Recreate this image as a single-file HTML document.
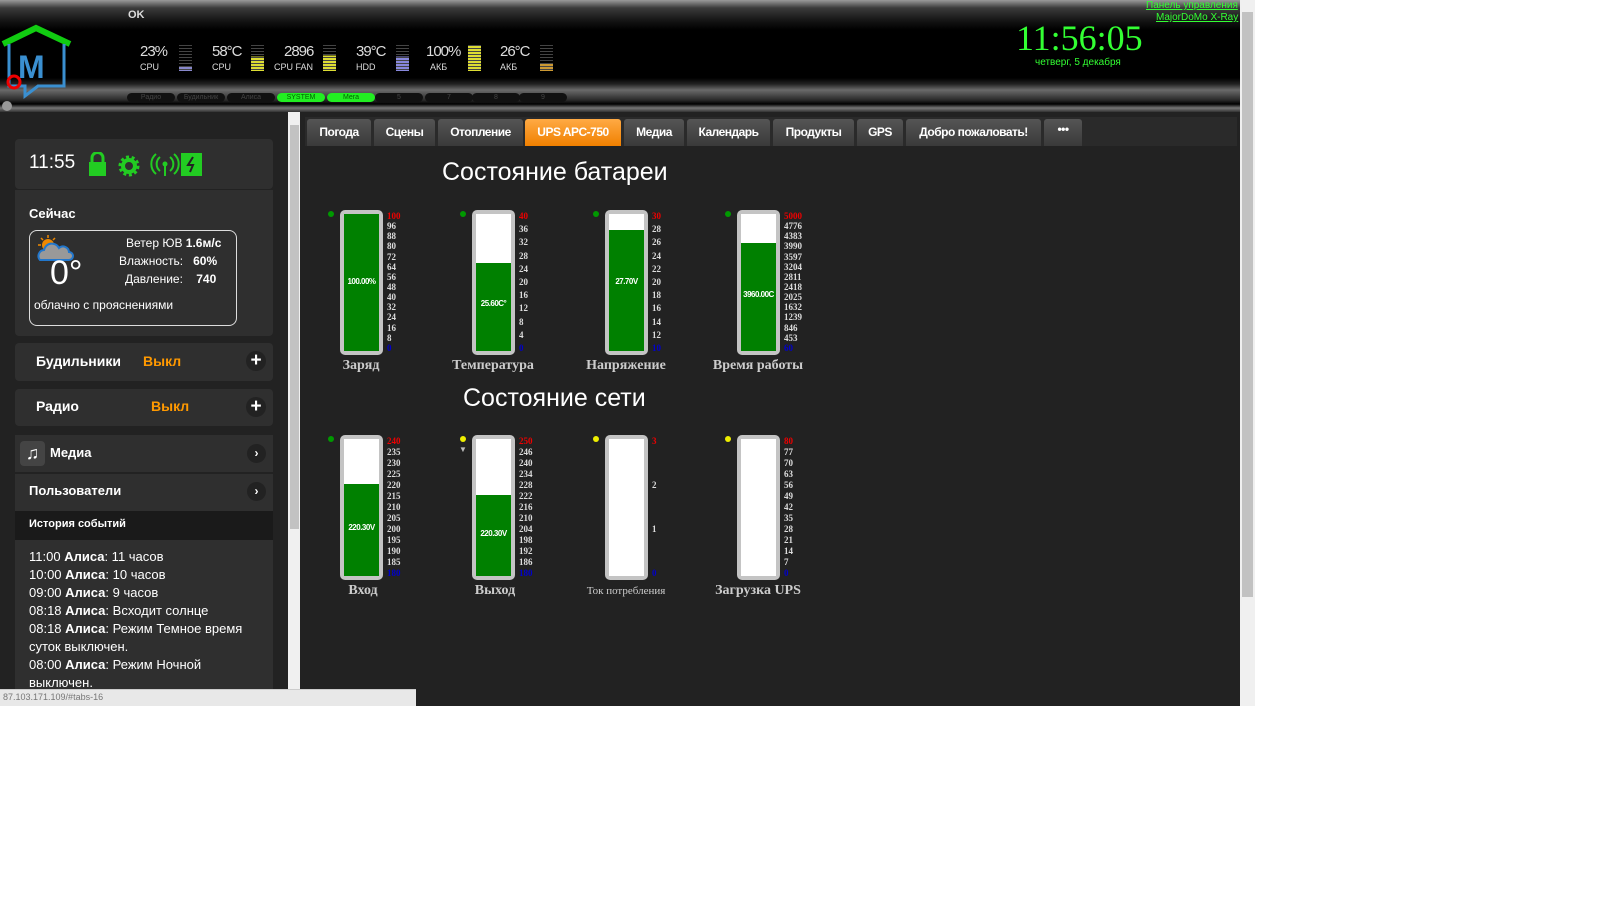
<!DOCTYPE html>
<html><head><meta charset="utf-8"><style>
*{margin:0;padding:0;box-sizing:border-box}
body{width:1600px;height:900px;background:#fff;font-family:"Liberation Sans",sans-serif;position:relative;overflow:hidden}
.a{position:absolute}
#hdr{left:0;top:0;width:1240px;height:112px;background:linear-gradient(#9a9a9a 0px,#3a3a3a 8px,#111 22px,#000 30px,#000 78px,#222 84px,#6a6a6a 90px,#2a2a2a 100px,#000 104px,#777 108px,#333 112px)}
.st{color:#ddd;font-size:15px;letter-spacing:-1px}
.sl{color:#ddd;font-size:9px}
.bars{width:13px;height:26px;background:repeating-linear-gradient(#444 0 1px,transparent 1px 3px)}
.pill{top:93px;height:9px;width:48px;border-radius:5px;background:#111;color:#444;font-size:7px;text-align:center;line-height:9px}
#side{left:0;top:112px;width:288px;height:594px;background:#222}
.pan{background:#2f2f2f;border-radius:4px;left:15px;width:258px}
.w{color:#fff}
#main{left:300px;top:112px;width:940px;height:594px;background:#222}
.tab{top:119px;height:27px;background:linear-gradient(#555,#3a3a3a);color:#fff;font-size:12px;font-weight:bold;line-height:26px;text-align:center;border-radius:3px 3px 0 0;letter-spacing:-0.5px}
.tube{width:43px;height:145px;background:#c4c4c4;border-radius:5px}
.in{left:4px;top:4px;width:35px;height:137px;background:#fff;overflow:hidden}
.fill{left:0;bottom:0;width:35px;background:#008000}
.val{left:0;width:35px;text-align:center;color:#fff;font-size:8px;font-weight:bold;letter-spacing:-0.5px;top:63px}
.sc{height:141px;top:2px;display:flex;flex-direction:column;justify-content:space-between;font-family:"Liberation Serif",serif;font-size:9px;font-weight:bold;color:#ddd;line-height:9px}
.sc b:first-child{color:#e00}.sc b:last-child{color:#00c}
.dot{width:6px;height:6px;border-radius:3px;background:#090}
.lab{color:#ccc;font-family:"Liberation Serif",serif;font-weight:bold;font-size:14px;width:140px;text-align:center}
.ttl{color:#fff;font-size:25px}
.ev{color:#fff;font-size:13px;line-height:18px}
</style></head><body>
<div id="hdr" class="a"></div>
<div class="a" style="left:128px;top:9px;color:#ddd;font-size:11px;font-weight:bold">OK</div>
<svg class="a" style="left:0;top:24px" width="75" height="75" viewBox="0 0 75 75">
<path d="M3 20 L36 4 L70 20" stroke="#1c1" stroke-width="6" fill="none"/>
<path d="M9 20 V62 H25 V72 L38 62 H64 V20" stroke="#3a8fd0" stroke-width="3" fill="none"/>
<text x="18" y="54" font-family="Liberation Sans" font-size="32" font-weight="bold" fill="#3a8fd0">M</text>
<circle cx="14" cy="58" r="6" stroke="#e00" stroke-width="3" fill="none"/>
</svg>
<div class="a st" style="left:140px;top:43px">23%</div><div class="a sl" style="left:140px;top:62px">CPU</div><div class="a bars" style="left:179px;top:45px;background:repeating-linear-gradient(#444 0 1px,transparent 1px 3px),linear-gradient(transparent 80%,#88c 80%)"></div>
<div class="a st" style="left:212px;top:43px">58°C</div><div class="a sl" style="left:212px;top:62px">CPU</div><div class="a bars" style="left:251px;top:45px;background:repeating-linear-gradient(#444 0 1px,transparent 1px 3px),linear-gradient(transparent 45%,#dd3 45%)"></div>
<div class="a st" style="left:284px;top:43px">2896</div><div class="a sl" style="left:274px;top:62px">CPU FAN</div><div class="a bars" style="left:323px;top:45px;background:repeating-linear-gradient(#444 0 1px,transparent 1px 3px),linear-gradient(transparent 40%,#dd3 40%)"></div>
<div class="a st" style="left:356px;top:43px">39°C</div><div class="a sl" style="left:356px;top:62px">HDD</div><div class="a bars" style="left:396px;top:45px;background:repeating-linear-gradient(#444 0 1px,transparent 1px 3px),linear-gradient(transparent 45%,#88d 45%)"></div>
<div class="a st" style="left:426px;top:43px">100%</div><div class="a sl" style="left:430px;top:62px">АКБ</div><div class="a bars" style="left:468px;top:45px;background:repeating-linear-gradient(#444 0 1px,transparent 1px 3px),linear-gradient(#dd3,#dd3)"></div>
<div class="a st" style="left:500px;top:43px">26°C</div><div class="a sl" style="left:500px;top:62px">АКБ</div><div class="a bars" style="left:540px;top:45px;background:repeating-linear-gradient(#444 0 1px,transparent 1px 3px),linear-gradient(transparent 70%,#c93 70%)"></div>
<div class="a pill" style="left:127px">Радио</div><div class="a pill" style="left:177px">Будильник</div><div class="a pill" style="left:227px">Алиса</div><div class="a pill" style="left:277px;background:#2e2;color:#060">SYSTEM</div><div class="a pill" style="left:327px;background:#2e2;color:#060">Мега</div><div class="a pill" style="left:375px">5</div><div class="a pill" style="left:425px">7</div><div class="a pill" style="left:472px">8</div><div class="a pill" style="left:519px">9</div>
<div class="a" style="left:2px;top:101px;width:10px;height:10px;border-radius:5px;background:#999"></div>
<div class="a" style="left:1016px;top:17px;color:#3f3;font-family:'Liberation Serif',serif;font-size:36px">11:56:05</div>
<div class="a" style="left:1035px;top:57px;color:#3f3;font-size:10px">четверг,  5 декабря</div>
<div class="a" style="left:1146px;top:0;color:#3f3;font-size:10px;text-decoration:underline">Панель управления</div>
<div class="a" style="left:1156px;top:12px;color:#3f3;font-size:10px;text-decoration:underline">MajorDoMo X-Ray</div>

<div id="side" class="a"></div>
<div class="a pan" style="top:139px;height:50px"></div>
<div class="a w" style="left:29px;top:152px;font-size:19px">11:55</div>
<svg class="a" style="left:88px;top:152px" width="120" height="26">
<rect x="1" y="10" width="17" height="14" fill="#2c2"/><path d="M4 11 V6 a5.5 5.5 0 0 1 11 0 V11" stroke="#2c2" stroke-width="3" fill="none"/>
<circle cx="41" cy="14" r="6" stroke="#2c2" stroke-width="4" fill="none"/><circle cx="41" cy="14" r="9" stroke="#2c2" stroke-width="3" stroke-dasharray="3 2.6" fill="none"/>
<path d="M72 5 a9 9 0 0 0 0 14 M68 2 a13 13 0 0 0 0 20 M82 5 a9 9 0 0 1 0 14 M86 2 a13 13 0 0 1 0 20" stroke="#2c2" stroke-width="2" fill="none"/><circle cx="77" cy="12" r="2.5" fill="#2c2"/><rect x="76" y="12" width="2" height="12" fill="#2c2"/>
<rect x="93" y="1" width="21" height="23" fill="#2c2"/><path d="M105 5 L100 13 H105 L102 20" stroke="#222" stroke-width="2" fill="none"/>
</svg>
<div class="a" style="left:15px;top:190px;width:258px;height:146px;background:#2f2f2f;border-radius:0 0 4px 4px"></div>
<div class="a w" style="left:29px;top:206px;font-size:13px;font-weight:bold">Сейчас</div>
<div class="a" style="left:29px;top:230px;width:208px;height:96px;border:1px solid #ddd;border-radius:8px"></div>
<svg class="a" style="left:32px;top:233px" width="46" height="30"><circle cx="16" cy="12" r="6" fill="#e80"/><path d="M16 2v3M6 12h3M9 5l2 2M23 5l-2 2" stroke="#e80" stroke-width="1.5"/><path d="M8 27 a6 6 0 0 1 4-10 a8 8 0 0 1 15-2 a6 6 0 0 1 10 4 a4 4 0 0 1 0 8z" fill="#999" stroke="#27c" stroke-width="2"/></svg>
<div class="a w" style="left:50px;top:254px;font-size:34px">0°</div>
<div class="a w" style="left:126px;top:236px;font-size:12px">Ветер ЮВ <b>1.6м/с</b></div>
<div class="a w" style="left:119px;top:254px;font-size:12px">Влажность:&nbsp;&nbsp; <b>60%</b></div>
<div class="a w" style="left:125px;top:272px;font-size:12px">Давление:&nbsp;&nbsp;&nbsp; <b>740</b></div>
<div class="a w" style="left:34px;top:298px;font-size:12px">облачно с прояснениями</div>

<div class="a pan" style="top:343px;height:38px"></div>
<div class="a w" style="left:36px;top:353px;font-size:14px;font-weight:bold">Будильники</div>
<div class="a" style="left:143px;top:353px;font-size:14px;font-weight:bold;color:#f90">Выкл</div>
<div class="a" style="left:246px;top:351px;width:20px;height:20px;border-radius:10px;background:#222;color:#fff;font-size:19px;font-weight:bold;text-align:center;line-height:20px">+</div>
<div class="a pan" style="top:389px;height:37px"></div>
<div class="a w" style="left:36px;top:398px;font-size:14px;font-weight:bold">Радио</div>
<div class="a" style="left:151px;top:398px;font-size:14px;font-weight:bold;color:#f90">Выкл</div>
<div class="a" style="left:246px;top:397px;width:20px;height:20px;border-radius:10px;background:#222;color:#fff;font-size:19px;font-weight:bold;text-align:center;line-height:20px">+</div>
<div class="a" style="left:15px;top:435px;width:258px;height:38px;background:#2f2f2f;border-bottom:1px solid #222"></div>
<div class="a" style="left:20px;top:441px;width:25px;height:25px;border-radius:4px;background:#444;color:#fff;font-size:18px;text-align:center;line-height:25px">♫</div>
<div class="a w" style="left:50px;top:445px;font-size:13px;font-weight:bold">Медиа</div>
<div class="a" style="left:247px;top:444px;width:19px;height:19px;border-radius:10px;background:#222;color:#fff;font-size:12px;font-weight:bold;text-align:center;line-height:19px">›</div>
<div class="a" style="left:15px;top:474px;width:258px;height:37px;background:#2f2f2f"></div>
<div class="a w" style="left:29px;top:483px;font-size:13px;font-weight:bold">Пользователи</div>
<div class="a" style="left:247px;top:482px;width:19px;height:19px;border-radius:10px;background:#222;color:#fff;font-size:12px;font-weight:bold;text-align:center;line-height:19px">›</div>
<div class="a" style="left:15px;top:511px;width:258px;height:29px;background:#1a1a1a"></div>
<div class="a w" style="left:29px;top:518px;font-size:11px;font-weight:bold">История событий</div>
<div class="a" style="left:15px;top:540px;width:258px;height:166px;background:#2f2f2f"></div>
<div class="a ev" style="left:29px;top:548px;width:232px">11:00 <b>Алиса</b>: 11 часов<br>10:00 <b>Алиса</b>: 10 часов<br>09:00 <b>Алиса</b>: 9 часов<br>08:18 <b>Алиса</b>: Всходит солнце<br>08:18 <b>Алиса</b>: Режим Темное время суток выключен.<br>08:00 <b>Алиса</b>: Режим Ночной<br>выключен.</div>
<div class="a" style="left:288px;top:112px;width:12px;height:594px;background:#f0f0f0"></div>
<div class="a" style="left:290px;top:125px;width:9px;height:404px;background:#c2c2c2"></div>

<div id="main" class="a"></div>
<div class="a" style="left:305px;top:117px;width:932px;height:29px;background:#2a2a2a"></div>
<div class="a tab" style="left:307px;width:64px">Погода</div>
<div class="a tab" style="left:374px;width:61px">Сцены</div>
<div class="a tab" style="left:438px;width:85px">Отопление</div>
<div class="a tab" style="left:525px;width:96px;background:linear-gradient(#fa4,#f08000)">UPS APC-750</div>
<div class="a tab" style="left:624px;width:60px">Медиа</div>
<div class="a tab" style="left:687px;width:83px">Календарь</div>
<div class="a tab" style="left:773px;width:81px">Продукты</div>
<div class="a tab" style="left:857px;width:46px">GPS</div>
<div class="a tab" style="left:906px;width:135px">Добро пожаловать!</div>
<div class="a tab" style="left:1044px;width:38px;line-height:20px">•••</div>
<div class="a ttl" style="left:442px;top:158px">Состояние батареи</div>
<div class="a ttl" style="left:463px;top:384px">Состояние сети</div>

<div class="a dot" style="left:328px;top:211px"></div>
<div class="a tube" style="left:340px;top:210px"><div class="a in"><div class="a fill" style="height:100%"></div><div class="a val">100.00%</div></div></div>
<div class="a sc" style="left:387px;top:212px"><b>100</b><b>96</b><b>88</b><b>80</b><b>72</b><b>64</b><b>56</b><b>48</b><b>40</b><b>32</b><b>24</b><b>16</b><b>8</b><b>0</b></div>
<div class="a lab" style="left:291px;top:358px">Заряд</div>

<div class="a dot" style="left:460px;top:211px"></div>
<div class="a tube" style="left:472px;top:210px"><div class="a in"><div class="a fill" style="height:64%"></div><div class="a val" style="top:85px">25.60C°</div></div></div>
<div class="a sc" style="left:519px;top:212px"><b>40</b><b>36</b><b>32</b><b>28</b><b>24</b><b>20</b><b>16</b><b>12</b><b>8</b><b>4</b><b>0</b></div>
<div class="a lab" style="left:423px;top:358px">Температура</div>

<div class="a dot" style="left:593px;top:211px"></div>
<div class="a tube" style="left:605px;top:210px"><div class="a in"><div class="a fill" style="height:88%"></div><div class="a val">27.70V</div></div></div>
<div class="a sc" style="left:652px;top:212px"><b>30</b><b>28</b><b>26</b><b>24</b><b>22</b><b>20</b><b>18</b><b>16</b><b>14</b><b>12</b><b>10</b></div>
<div class="a lab" style="left:556px;top:358px">Напряжение</div>

<div class="a dot" style="left:725px;top:211px"></div>
<div class="a tube" style="left:737px;top:210px"><div class="a in"><div class="a fill" style="height:79%"></div><div class="a val" style="top:76px">3960.00C</div></div></div>
<div class="a sc" style="left:784px;top:212px"><b>5000</b><b>4776</b><b>4383</b><b>3990</b><b>3597</b><b>3204</b><b>2811</b><b>2418</b><b>2025</b><b>1632</b><b>1239</b><b>846</b><b>453</b><b>60</b></div>
<div class="a lab" style="left:688px;top:358px">Время работы</div>

<div class="a dot" style="left:328px;top:436px"></div>
<div class="a tube" style="left:340px;top:435px"><div class="a in"><div class="a fill" style="height:67%"></div><div class="a val" style="top:84px">220.30V</div></div></div>
<div class="a sc" style="left:387px;top:437px"><b>240</b><b>235</b><b>230</b><b>225</b><b>220</b><b>215</b><b>210</b><b>205</b><b>200</b><b>195</b><b>190</b><b>185</b><b>180</b></div>
<div class="a lab" style="left:293px;top:583px">Вход</div>

<div class="a dot" style="left:460px;top:436px;background:#ee0"></div>
<div class="a" style="left:459px;top:445px;color:#bbb;font-size:8px">▼</div>
<div class="a tube" style="left:472px;top:435px"><div class="a in"><div class="a fill" style="height:59%"></div><div class="a val" style="top:90px">220.30V</div></div></div>
<div class="a sc" style="left:519px;top:437px"><b>250</b><b>246</b><b>240</b><b>234</b><b>228</b><b>222</b><b>216</b><b>210</b><b>204</b><b>198</b><b>192</b><b>186</b><b>180</b></div>
<div class="a lab" style="left:425px;top:583px">Выход</div>

<div class="a dot" style="left:593px;top:436px;background:#ee0"></div>
<div class="a tube" style="left:605px;top:435px"><div class="a in"></div></div>
<div class="a sc" style="left:652px;top:437px"><b>3</b><b>2</b><b>1</b><b>0</b></div>
<div class="a lab" style="left:556px;top:585px;font-size:11px;font-weight:normal">Ток потребления</div>

<div class="a dot" style="left:725px;top:436px;background:#ee0"></div>
<div class="a tube" style="left:737px;top:435px"><div class="a in"></div></div>
<div class="a sc" style="left:784px;top:437px"><b>80</b><b>77</b><b>70</b><b>63</b><b>56</b><b>49</b><b>42</b><b>35</b><b>28</b><b>21</b><b>14</b><b>7</b><b>0</b></div>
<div class="a lab" style="left:688px;top:583px">Загрузка UPS</div>

<div class="a" style="left:0;top:689px;width:416px;height:17px;background:#e8e8e8;border-top:1px solid #ccc;color:#777;font-size:9px;padding:2px 3px">87.103.171.109/#tabs-16</div>
<div class="a" style="left:1240px;top:0;width:15px;height:706px;background:#f0f0f0"></div>
<div class="a" style="left:1242px;top:12px;width:11px;height:585px;background:#c2c2c2"></div>
</body></html>
